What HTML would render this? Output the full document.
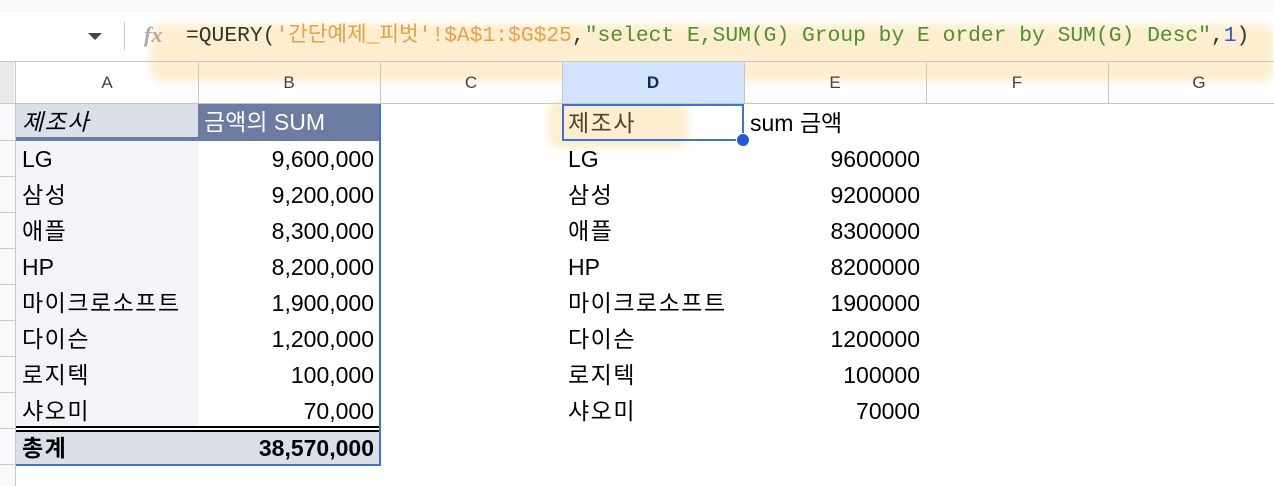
<!DOCTYPE html>
<html><head><meta charset="utf-8"><style>
*{margin:0;padding:0;box-sizing:border-box}
body{width:1274px;height:486px;overflow:hidden;background:#fff;position:relative;font-family:"Liberation Sans","Noto Sans CJK KR",sans-serif;color:#000}
.a{position:absolute}
.c{position:absolute;height:36px;line-height:36px;font-size:23px;padding:0 6px;white-space:nowrap}
.k{letter-spacing:1.5px}
.r{text-align:right}
.mono{font-family:"Liberation Mono","Noto Sans CJK KR",monospace}
</style></head><body>
<div class="a" style="left:0;top:0;width:1274px;height:12px;background:#f8f9fb"></div>
<div class="a" style="left:150px;top:24px;width:1124px;height:58px;background:#fbe6b5;opacity:.65;border-radius:14px;filter:blur(4px)"></div>
<div class="a" style="left:548px;top:100px;width:140px;height:48px;background:#fbe6b5;opacity:.65;border-radius:12px;filter:blur(4px)"></div>
<div class="a" style="left:88px;top:33px;width:0;height:0;border-left:7px solid transparent;border-right:7px solid transparent;border-top:7px solid #444"></div>
<div class="a" style="left:124px;top:22px;width:1px;height:28px;background:#c7c7c7"></div>
<div class="a" style="left:144px;top:22px;font:italic bold 22px 'Liberation Serif',serif;color:#aaa">fx</div>
<div class="a mono" style="left:186px;top:23px;font-size:21.3px;line-height:26px;color:#333;white-space:nowrap">=QUERY(<span style="color:#e8a04a">'간단예제_피벗'!$A$1:$G$25</span>,<span style="color:#4f8f2e">"select E,SUM(G) Group by E order by SUM(G) Desc"</span>,<span style="color:#2c56c9">1</span>)</div>
<div class="a" style="left:0;top:61px;width:1274px;height:1px;background:#c7c7c7"></div>
<div class="a" style="left:0;top:62px;width:16px;height:424px;background:#f8f9fa;border-right:1px solid #c7c7c7"></div>
<div class="a" style="left:0;top:62px;width:14px;height:42px;background:#e8e9eb"></div>
<div class="a" style="left:562px;top:62px;width:182px;height:42px;background:#d3e3fd"></div>
<div class="a" style="left:0;top:103px;width:1274px;height:1px;background:#c7c7c7"></div>
<div id="hdr"></div>
<script>
var cols=[16,198,380,562,744,926,1108,1290],L="ABCDEFG",h="";
for(var i=0;i<7;i++){h+='<div class="a" style="left:'+cols[i+1]+'px;top:62px;width:1px;height:42px;background:#c7c7c7"></div>';
h+='<div class="a" style="left:'+cols[i]+'px;top:62px;width:182px;height:42px;line-height:42px;text-align:center;font-size:17px;color:'+(i==3?'#0b2a6b;font-weight:bold':'#444')+'">'+L[i]+'</div>';}
for(var r=0;r<10;r++){h+='<div class="a" style="left:0;top:'+(140+r*36)+'px;width:16px;height:1px;background:#c7c7c7"></div>';}
document.getElementById('hdr').outerHTML=h;
</script>
<div class="a" style="left:16px;top:104px;width:182px;height:37px;background:#dadfe8"></div>
<div class="a" style="left:198px;top:104px;width:182px;height:37px;background:#6b7ba2"></div>
<div class="a" style="left:16px;top:137px;width:182px;height:4px;background:#6b7ba2"></div>
<div class="a" style="left:16px;top:141px;width:182px;height:286px;background:#f3f4f8"></div>
<div class="a" style="left:16px;top:426px;width:364px;height:2px;background:#000"></div>
<div class="a" style="left:16px;top:430px;width:364px;height:2px;background:#000"></div>
<div class="a" style="left:16px;top:432px;width:364px;height:33px;background:#dadfe8"></div>
<div class="a" style="left:379px;top:104px;width:2px;height:362px;background:#3b73d9"></div>
<div class="a" style="left:16px;top:464px;width:365px;height:2px;background:#3b73d9"></div>
<div class="c k" style="left:16px;top:104px;font-style:italic">제조사</div>
<div class="c" style="left:198px;top:104px;color:#fff">금액의 SUM</div>
<div id="rows"></div>
<script>
var n=["LG","삼성","애플","HP","마이크로소프트","다이슨","로지텍","샤오미"],v=["9,600,000","9,200,000","8,300,000","8,200,000","1,900,000","1,200,000","100,000","70,000"],h="";
for(var i=0;i<8;i++){var t=141+i*36,k=i==0||i==3?'':' k';
h+='<div class="c'+k+'" style="left:16px;top:'+t+'px">'+n[i]+'</div><div class="c r" style="left:198px;top:'+t+'px;width:182px">'+v[i]+'</div>';
h+='<div class="c'+k+'" style="left:562px;top:'+t+'px">'+n[i]+'</div><div class="c r" style="left:744px;top:'+t+'px;width:182px">'+v[i].replace(/,/g,'')+'</div>';}
document.getElementById('rows').outerHTML=h;
</script>
<div class="c k" style="left:16px;top:430px;font-weight:bold">총계</div>
<div class="c r" style="left:198px;top:430px;width:182px;font-weight:bold">38,570,000</div>
<div class="a" style="left:562px;top:104px;width:182px;height:37px;border:2px solid #3b73d9"></div>
<div class="a" style="left:736px;top:133px;width:14px;height:14px;border-radius:50%;background:#2458d6;border:1px solid #fff"></div>
<div class="c k" style="left:562px;top:105px;color:#4d432c">제조사</div>
<div class="c" style="left:744px;top:105px">sum 금액</div>
<style>.c:not([style*="bold"]){font-weight:400}</style>
</body></html>
